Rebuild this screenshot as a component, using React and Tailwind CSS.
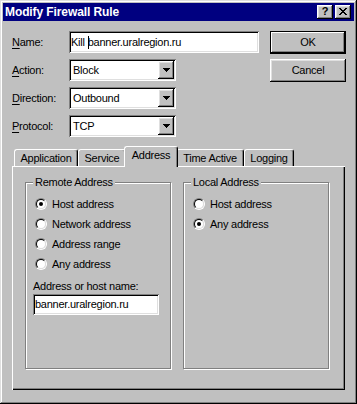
import React from "react";

const raised =
  "shadow-[inset_-1px_-1px_#000,inset_1px_1px_#fff,inset_-2px_-2px_#808080,inset_2px_2px_#dfdfdf]";
const sunken =
  "shadow-[inset_1px_1px_#808080,inset_-1px_-1px_#fff,inset_2px_2px_#000,inset_-2px_-2px_#dfdfdf]";

function Arrow() {
  return (
    <svg width="7" height="4" viewBox="0 0 7 4" shapeRendering="crispEdges">
      <rect x="0" y="0" width="7" height="1" fill="#000" />
      <rect x="1" y="1" width="5" height="1" fill="#000" />
      <rect x="2" y="2" width="3" height="1" fill="#000" />
      <rect x="3" y="3" width="1" height="1" fill="#000" />
    </svg>
  );
}

function CloseGlyph() {
  const px = [
    "xx....xx",
    ".xx..xx.",
    "..xxxx..",
    "...xx...",
    "..xxxx..",
    ".xx..xx.",
    "xx....xx",
  ];
  return (
    <svg width="8" height="7" viewBox="0 0 8 7" shapeRendering="crispEdges">
      {px.map((row, y) =>
        row.split("").map((c, x) =>
          c === "x" ? <rect key={x + "-" + y} x={x} y={y} width="1" height="1" fill="#000" /> : null
        )
      )}
    </svg>
  );
}

function Radio({ checked }) {
  return (
    <span className="w-[12px] h-[12px] rounded-full border border-t-[#808080] border-l-[#808080] border-r-white border-b-white flex shrink-0">
      <span className="flex-1 rounded-full border border-t-black border-l-black border-r-[#dfdfdf] border-b-[#dfdfdf] bg-white flex items-center justify-center">
        {checked && <span className="w-[4px] h-[4px] rounded-full bg-black" />}
      </span>
    </span>
  );
}

function RadioRow({ label, checked }) {
  return (
    <div className="h-[20px] flex items-center gap-[5px]">
      <Radio checked={checked} />
      <span>{label}</span>
    </div>
  );
}

function Label({ k, rest }) {
  return (
    <span className="w-[57px] shrink-0">
      <span className="underline underline-offset-[2px]">{k}</span>
      {rest}
    </span>
  );
}

function Combo({ value }) {
  return (
    <div className={"w-[107px] h-[22px] bg-white flex p-[2px] " + sunken}>
      <span className="flex-1 flex items-center pl-[2px]">{value}</span>
      <span className={"w-[16px] bg-[#c0c0c0] flex items-center justify-center pl-[1px] " + raised}>
        <Arrow />
      </span>
    </div>
  );
}

function Tab({ label, w, selected }) {
  if (selected) {
    return (
      <div
        className={
          "relative z-10 h-[21px] -mb-px -mx-[2px] bg-[#c0c0c0] border-t border-l border-r border-t-white border-l-white border-r-black rounded-t-[3px] shadow-[inset_-1px_0_#808080] flex items-center justify-center pb-[3px] " +
          w
        }
      >
        {label}
      </div>
    );
  }
  return (
    <div
      className={
        "h-[17px] bg-[#c0c0c0] border-t border-l border-r border-t-white border-l-white border-r-black rounded-t-[3px] shadow-[inset_-1px_0_#808080] flex items-center justify-center " +
        w
      }
    >
      {label}
    </div>
  );
}

function Group({ title, children, pl }) {
  return (
    <div className={"relative w-[146px] h-[187px] border border-[#808080] shadow-[inset_1px_1px_#fff,1px_1px_#fff] pt-[11px] " + pl}>
      <span className="absolute -top-[8px] left-[7px] px-[2px] bg-[#c0c0c0] leading-[14px]">{title}</span>
      {children}
    </div>
  );
}

export default function App() {
  return (
    <div className="w-[357px] h-[404px] bg-[#c0c0c0] p-[3px] flex flex-col text-black text-[11px] tracking-[-0.25px] font-['Liberation_Sans',Arial,sans-serif] shadow-[inset_-1px_-1px_#000,inset_1px_1px_#dfdfdf,inset_-2px_-2px_#808080,inset_2px_2px_#fff]">
      {/* title bar */}
      <div className="h-[18px] bg-[#000080] flex items-center pl-[2px] pr-[3px]">
        <span className="text-white font-bold text-[12px] tracking-[-0.1px]">Modify Firewall Rule</span>
        <div className="ml-auto flex gap-[2px]">
          <span className={"w-[16px] h-[14px] bg-[#c0c0c0] flex items-center justify-center font-bold text-[11px] leading-none pb-px " + raised}>
            ?
          </span>
          <span className={"w-[16px] h-[14px] bg-[#c0c0c0] flex items-center justify-center pb-px " + raised}>
            <CloseGlyph />
          </span>
        </div>
      </div>

      {/* form */}
      <div className="mt-[10px] pl-[9px] flex">
        <div className="flex flex-col gap-[6px]">
          <div className="h-[22px] flex items-center">
            <Label k="N" rest="ame:" />
            <div className={"w-[190px] h-[22px] bg-white flex items-center pl-[2px] " + sunken}>
              <span>Kill</span>
              <span className="inline-block w-px h-[13px] bg-black -mr-px ml-[3px]" />
              <span>banner.uralregion.ru</span>
            </div>
          </div>
          <div className="h-[22px] flex items-center">
            <Label k="A" rest="ction:" />
            <Combo value="Block" />
          </div>
          <div className="h-[22px] flex items-center">
            <Label k="D" rest="irection:" />
            <Combo value="Outbound" />
          </div>
          <div className="h-[22px] flex items-center">
            <Label k="P" rest="rotocol:" />
            <Combo value="TCP" />
          </div>
        </div>
        <div className="ml-[11px] flex flex-col gap-[5px]">
          <button className="w-[76px] h-[23px] bg-[#c0c0c0] border border-black shadow-[inset_-1px_-1px_#000,inset_1px_1px_#fff,inset_-2px_-2px_#808080] flex items-center justify-center">
            OK
          </button>
          <button className={"w-[76px] h-[23px] bg-[#c0c0c0] flex items-center justify-center " + raised}>
            Cancel
          </button>
        </div>
      </div>

      {/* tabs */}
      <div className="mt-[9px] ml-[11px] h-[20px] flex items-end">
        <Tab label="Application" w="w-[64px]" />
        <Tab label="Service" w="w-[48px]" />
        <Tab label="Address" w="w-[54px]" selected />
        <Tab label="Time Active" w="w-[68px]" />
        <Tab label="Logging" w="w-[50px]" />
      </div>
      <div className="ml-[9px] w-[333px] h-[224px] shadow-[inset_1px_1px_#fff,inset_-1px_-1px_#000,inset_-2px_-2px_#808080] pt-[16px] pl-[13px] flex gap-[12px]">
        <Group title="Remote Address" pl="pl-[7px]">
          <div className="pl-[2px]">
            <RadioRow label="Host address" checked />
            <RadioRow label="Network address" />
            <RadioRow label="Address range" />
            <RadioRow label="Any address" />
          </div>
          <div className="mt-[5px] h-[14px] leading-[14px]">Address or host name:</div>
          <div className={"mt-px w-[126px] h-[21px] bg-white flex items-center pl-[2px] " + sunken}>
            banner.uralregion.ru
          </div>
        </Group>
        <Group title="Local Address" pl="pl-[9px]">
          <RadioRow label="Host address" />
          <RadioRow label="Any address" checked />
        </Group>
      </div>
    </div>
  );
}
